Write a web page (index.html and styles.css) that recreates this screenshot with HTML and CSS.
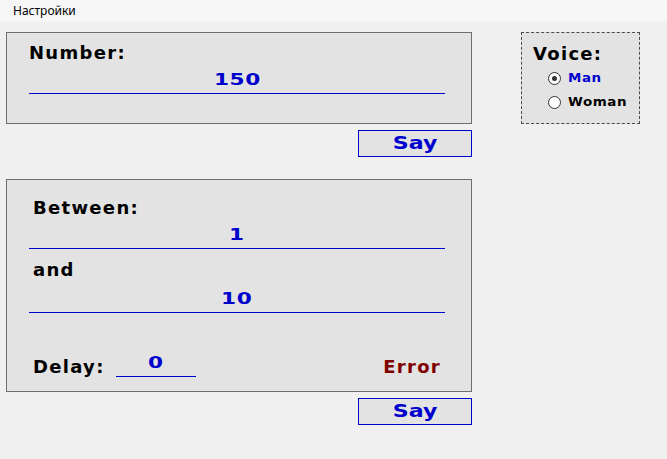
FILE: index.html
```html
<!DOCTYPE html>
<html lang="en">
<head>
<meta charset="utf-8">
<title>Say</title>
<link rel="stylesheet" href="styles.css">
</head>
<body>
<div class="menubar"><span class="menu-item">Настройки</span></div>
<div class="main">
  <div class="left">
    <section class="panel panel-number">
      <div class="label">Number:</div>
      <div class="field"><span class="wide">150</span></div>
    </section>
    <div class="btn-row"><button class="say"><span class="wide">Say</span></button></div>
    <section class="panel panel-range">
      <div class="label label-in">Between:</div>
      <div class="field"><span class="wide">1</span></div>
      <div class="label label-in label-and">and</div>
      <div class="field field-second"><span class="wide">10</span></div>
      <div class="delay-row">
        <span class="label label-in delay-label">Delay:</span>
        <span class="delay-field"><span class="wide">0</span></span>
        <span class="error">Error</span>
      </div>
    </section>
    <div class="btn-row"><button class="say"><span class="wide">Say</span></button></div>
  </div>
  <div class="voice">
    <div class="label">Voice:</div>
    <div class="radio-row">
      <span class="radio checked"><span class="dot"></span></span>
      <span class="radio-text selected">Man</span>
    </div>
    <div class="radio-row">
      <span class="radio"></span>
      <span class="radio-text">Woman</span>
    </div>
  </div>
</div>
</body>
</html>
```

FILE: styles.css
```css
html, body {
  margin: 0;
  padding: 0;
}
body {
  width: 667px;
  height: 459px;
  background: #f0f0f0;
  font-family: "DejaVu Sans", "Liberation Sans", sans-serif;
  font-weight: bold;
  overflow: hidden;
}
.menubar {
  height: 22px;
  background: #f6f6f6;
  display: flex;
  align-items: center;
}
.menu-item {
  font-family: "Noto Sans", "Liberation Sans", sans-serif;
  font-weight: normal;
  font-size: 12px;
  line-height: 22px;
  color: #000;
  padding-left: 13px;
}
.main {
  display: flex;
  align-items: flex-start;
  padding-top: 10px;
  padding-left: 6px;
}
.left {
  width: 466px;
  display: flex;
  flex-direction: column;
}
.panel {
  box-sizing: border-box;
  width: 466px;
  background: #e3e3e3;
  border: 1px solid #6e6e6e;
  padding-left: 22px;
}
.panel-number {
  height: 92px;
  padding-top: 9px;
}
.panel-range {
  height: 213px;
  padding-top: 17px;
  margin-top: 22px;
}
.label {
  font-size: 18px;
  line-height: 21px;
  letter-spacing: 1.3px;
  color: #000;
}
.label-in {
  margin-left: 4px;
}
.label-and {
  margin-top: 10px;
}
.wide {
  display: inline-block;
  transform: scaleX(1.35);
}
.field {
  width: 416px;
  margin-top: 7px;
  border-bottom: 1px solid #0000cc;
  padding-bottom: 3px;
  box-sizing: border-box;
  text-align: center;
  font-size: 16px;
  line-height: 20px;
  letter-spacing: 0.5px;
  color: #0000cc;
}
.field-second {
  margin-top: 9px;
}
.delay-row {
  display: flex;
  align-items: flex-start;
  width: 416px;
  margin-top: 40px;
}
.delay-label {
  width: 83px;
  margin-top: 3px;
}
.delay-field {
  box-sizing: border-box;
  width: 80px;
  border-bottom: 1px solid #0000cc;
  padding-bottom: 3px;
  text-align: center;
  font-size: 16px;
  line-height: 20px;
  color: #0000cc;
}
.error {
  margin-left: auto;
  margin-right: 4px;
  margin-top: 3px;
  font-size: 18px;
  line-height: 21px;
  letter-spacing: 1.3px;
  color: #800000;
}
.btn-row {
  display: flex;
  justify-content: flex-end;
  margin-top: 6px;
}
.say {
  box-sizing: border-box;
  width: 114px;
  height: 27px;
  margin: 0;
  padding: 0;
  background: #e3e3e3;
  border: 1px solid #0000cc;
  font-family: "DejaVu Sans", "Liberation Sans", sans-serif;
  font-weight: bold;
  font-size: 17px;
  line-height: 25px;
  color: #0000cc;
}
.say .wide {
  transform: scaleX(1.3);
}
.voice {
  box-sizing: border-box;
  width: 119px;
  height: 92px;
  margin-left: 49px;
  background: #e3e3e3;
  border: 1px dashed #4a4a4a;
  padding: 10px 0 0 11px;
}
.radio-row {
  display: flex;
  align-items: center;
  height: 24px;
  margin-left: 15px;
}
.voice .label + .radio-row {
  margin-top: 2px;
}
.radio {
  box-sizing: border-box;
  width: 13px;
  height: 13px;
  border: 1px solid #333;
  border-radius: 50%;
  background: #fff;
  display: flex;
  align-items: center;
  justify-content: center;
}
.dot {
  width: 5px;
  height: 5px;
  border-radius: 50%;
  background: #333;
}
.radio-text {
  display: inline-block;
  margin-left: 7px;
  font-size: 12px;
  line-height: 14px;
  letter-spacing: 0.5px;
  color: #000;
  transform: scaleX(1.12);
  transform-origin: left center;
}
.radio-text.selected {
  color: #0000cc;
}
```
